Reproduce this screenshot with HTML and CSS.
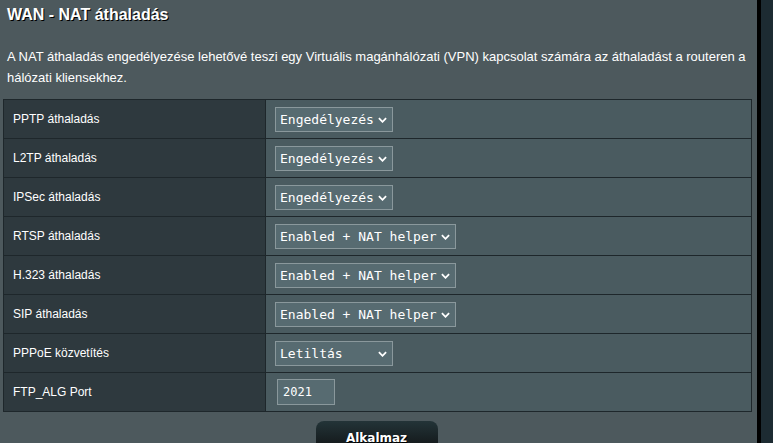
FILE: index.html
```html
<!DOCTYPE html>
<html lang="hu">
<head>
<meta charset="utf-8">
<title>WAN - NAT áthaladás</title>
<link rel="stylesheet" href="styles.css">
</head>
<body>
<div class="page">
  <main class="main">
    <h1 class="title">WAN - NAT áthaladás</h1>
    <div class="split-line"></div>
    <p class="desc">A NAT áthaladás engedélyezése lehetővé teszi egy Virtuális magánhálózati (VPN) kapcsolat számára az áthaladást a routeren a hálózati kliensekhez.</p>
    <table class="form-table">
      <tr>
        <th>PPTP áthaladás</th>
        <td><span class="sel sel-short"><span class="sel-text">Engedélyezés</span><svg class="chev" viewBox="0 0 10 6" width="10" height="6"><path d="M1 1 L5 5 L9 1" fill="none" stroke="#fff" stroke-width="2"/></svg></span></td>
      </tr>
      <tr>
        <th>L2TP áthaladás</th>
        <td><span class="sel sel-short"><span class="sel-text">Engedélyezés</span><svg class="chev" viewBox="0 0 10 6" width="10" height="6"><path d="M1 1 L5 5 L9 1" fill="none" stroke="#fff" stroke-width="2"/></svg></span></td>
      </tr>
      <tr>
        <th>IPSec áthaladás</th>
        <td><span class="sel sel-short"><span class="sel-text">Engedélyezés</span><svg class="chev" viewBox="0 0 10 6" width="10" height="6"><path d="M1 1 L5 5 L9 1" fill="none" stroke="#fff" stroke-width="2"/></svg></span></td>
      </tr>
      <tr>
        <th>RTSP áthaladás</th>
        <td><span class="sel sel-long"><span class="sel-text">Enabled + NAT helper</span><svg class="chev" viewBox="0 0 10 6" width="10" height="6"><path d="M1 1 L5 5 L9 1" fill="none" stroke="#fff" stroke-width="2"/></svg></span></td>
      </tr>
      <tr>
        <th>H.323 áthaladás</th>
        <td><span class="sel sel-long"><span class="sel-text">Enabled + NAT helper</span><svg class="chev" viewBox="0 0 10 6" width="10" height="6"><path d="M1 1 L5 5 L9 1" fill="none" stroke="#fff" stroke-width="2"/></svg></span></td>
      </tr>
      <tr>
        <th>SIP áthaladás</th>
        <td><span class="sel sel-long"><span class="sel-text">Enabled + NAT helper</span><svg class="chev" viewBox="0 0 10 6" width="10" height="6"><path d="M1 1 L5 5 L9 1" fill="none" stroke="#fff" stroke-width="2"/></svg></span></td>
      </tr>
      <tr>
        <th>PPPoE közvetítés</th>
        <td><span class="sel sel-short"><span class="sel-text">Letiltás</span><svg class="chev" viewBox="0 0 10 6" width="10" height="6"><path d="M1 1 L5 5 L9 1" fill="none" stroke="#fff" stroke-width="2"/></svg></span></td>
      </tr>
      <tr>
        <th>FTP_ALG Port</th>
        <td><span class="port-input">2021</span></td>
      </tr>
    </table>
    <div class="actions"><button class="apply" type="button">Alkalmaz</button></div>
  </main>
  <div class="edge-black"></div>
  <div class="edge-dark"></div>
</div>
</body>
</html>
```
FILE: styles.css
```css
html, body {
  margin: 0;
  padding: 0;
  height: 100%;
  overflow: hidden;
}

body {
  font-family: "Liberation Sans", Arial, sans-serif;
  color: #fff;
  background: #4d595d;
}

.page {
  display: flex;
  height: 443px;
}

.main {
  width: 757px;
  flex: none;
  background: #4d595d;
  display: flex;
  flex-direction: column;
}

.edge-black {
  width: 4px;
  flex: none;
  background: #000;
}

.edge-dark {
  flex: 1;
  background: #1d2b32;
}

.title {
  margin: 0 0 0 7px;
  padding-top: 5px;
  font-size: 16px;
  line-height: 20px;
  font-weight: bold;
  color: #fff;
  text-shadow: 1px 1px 0 #000;
}

.split-line {
  margin: 10px 7px 0 7px;
  height: 1px;
  background: #7c878b;
}

.desc {
  margin: 11px 8px 0 7px;
  font-size: 13px;
  line-height: 21px;
  color: #fff;
}

.form-table {
  margin: 11px 0 0 3px;
  width: 749px;
  border-collapse: collapse;
  border: 1px solid #1e272b;
}

.form-table tr {
  height: 39px;
}

.form-table th,
.form-table td {
  border: 1px solid #1e272b;
  padding: 0 9px;
  vertical-align: middle;
}

.form-table th {
  width: 243px;
  background: #2e393e;
  text-align: left;
  font-weight: normal;
  font-size: 12px;
  color: #fff;
}

.form-table td {
  background: #4a5b60;
}

.sel {
  position: relative;
  display: flex;
  align-items: center;
  box-sizing: border-box;
  height: 25px;
  padding-left: 4px;
  background: #576b71;
  border: 1px solid #8a989c;
  font-family: "DejaVu Sans Mono", monospace;
  font-size: 13px;
  color: #fff;
}

.sel-short {
  width: 118px;
}

.sel-long {
  width: 181px;
}

.chev {
  position: absolute;
  right: 5px;
  top: 9px;
  width: 9px;
  height: 6px;
}

.port-input {
  display: flex;
  align-items: center;
  box-sizing: border-box;
  margin-left: 2px;
  width: 58px;
  height: 26px;
  padding-left: 5px;
  background: #576b71;
  border: 1px solid #8a989c;
  font-family: "DejaVu Sans Mono", monospace;
  font-size: 12px;
  color: #fff;
}

.actions {
  display: flex;
  justify-content: center;
  padding-top: 9px;
  padding-right: 4px;
}

.apply {
  width: 122px;
  height: 33px;
  border: 0;
  border-radius: 8px;
  background: linear-gradient(#233438 0%, #0f1011 100%);
  color: #fff;
  font-family: Verdana, "DejaVu Sans", sans-serif;
  font-size: 12px;
  font-weight: bold;
  text-shadow: 1px 1px 0 #000;
  padding: 0;
}
```
